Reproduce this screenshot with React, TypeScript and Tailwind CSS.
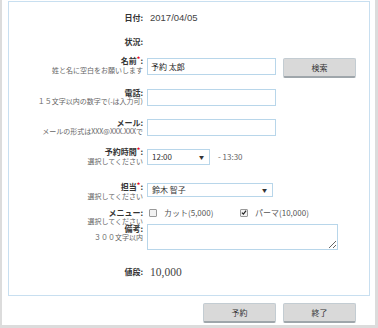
import type { ReactNode } from "react";

const jp = "font-['Noto_Sans_CJK_JP','Noto_Sans',sans-serif]";

type LabelProps = {
  title: string;
  req?: boolean;
  sub?: string;
};

function Label(props: LabelProps) {
  return (
    <div className="w-[134px] shrink-0 text-right">
      <div className="text-[8px] font-bold leading-[9px] text-[#333]">
        {props.title}
        {props.req && <span className="relative -top-[2px] text-[7px] text-[#e60012]">*</span>}:
      </div>
      {props.sub && <div className="text-[7px] leading-[8px] text-[#666]">{props.sub}</div>}
    </div>
  );
}

function Row({ h, children }: { h: string; children: ReactNode }) {
  return <div className={`flex items-start gap-[4px] ${h}`}>{children}</div>;
}

function Field({ value, className }: { value?: string; className: string }) {
  return (
    <div
      className={`flex items-center border border-[#b8d6ea] bg-white pl-[3px] text-[8px] text-[#222] ${className}`}
    >
      {value}
    </div>
  );
}

function Select({ value, className }: { value: string; className: string }) {
  return (
    <div
      className={`flex items-center justify-between border border-[#b8d6ea] bg-white pl-[4px] pr-[5px] text-[8px] text-[#333] ${className}`}
    >
      <span>{value}</span>
      <span className="text-[5px] text-[#333]">▼</span>
    </div>
  );
}

function Button({ children, className }: { children: ReactNode; className?: string }) {
  return (
    <div
      className={`flex h-[20px] w-[73px] items-center justify-center rounded-[2px] border border-[#c3ccd2] border-b-2 border-b-[#9fa6ab] bg-[#d9d9d9] text-[8px] text-[#333] ${className ?? ""}`}
    >
      {children}
    </div>
  );
}

function Check({ checked }: { checked?: boolean }) {
  return (
    <span className="flex h-[8px] w-[8px] items-center justify-center rounded-[1px] border border-[#999] bg-[#f2f2f2]">
      {checked && (
        <svg width="7" height="7" viewBox="0 0 8 8">
          <path d="M1.2 4.2 L3.2 6.2 L6.8 1.6" fill="none" stroke="#222" strokeWidth="1.6" />
        </svg>
      )}
    </span>
  );
}

export default function App() {
  return (
    <div className={`h-[328px] w-[378px] bg-[#dcdcdc] pb-[3px] pl-[2px] pr-[3px] ${jp}`}>
      <div className="flex h-full flex-col bg-white pl-[6px] pr-[5px] pt-[1px]">
        <div className="h-[295px] border border-[#c8dff0] pt-[8px]">
          <Row h="h-[24px]">
            <div className="w-[134px] text-right text-[8px] font-bold leading-[16px] text-[#333]">日付:</div>
            <div className="pl-[3px] font-['Liberation_Sans',sans-serif] text-[9.5px] leading-[16px] text-[#444]">
              2017/04/05
            </div>
          </Row>
          <Row h="h-[22px]">
            <div className="w-[134px] text-right text-[8px] font-bold leading-[16px] text-[#333]">状況:</div>
          </Row>
          <Row h="h-[32px]">
            <Label title="名前" req sub="姓と名に空白をお願いします" />
            <Field value="予約 太郎" className="mt-[2px] h-[17px] w-[129px]" />
            <Button className="ml-[3px] mt-[2px]">検索</Button>
          </Row>
          <Row h="h-[30px]">
            <Label title="電話" sub="１５文字以内の数字で(-は入力可)" />
            <Field className="mt-[1px] h-[17px] w-[129px]" />
          </Row>
          <Row h="h-[29px]">
            <Label title="メール" sub="メールの形式はXXX@XXX.XXXで" />
            <Field className="mt-[1px] h-[17px] w-[129px]" />
          </Row>
          <Row h="h-[35px]">
            <Label title="予約時間" req sub="選択してください" />
            <Select value="12:00" className="mt-[2px] h-[16px] w-[63px]" />
            <span className="ml-[4px] mt-[2px] text-[8px] leading-[16px] text-[#666]">- 13:30</span>
          </Row>
          <Row h="h-[26px]">
            <Label title="担当" req sub="選択してください" />
            <Select value="鈴木 智子" className="mt-[1px] h-[14px] w-[126px]" />
          </Row>
          <Row h="h-[16px]">
            <Label title="メニュー" sub="選択してください" />
            <div className="flex h-[9px] items-center pl-[2px] text-[8px] text-[#555]">
              <Check />
              <span className="ml-[7px] w-[76px]">カット(5,000)</span>
              <Check checked />
              <span className="ml-[7px]">パーマ(10,000)</span>
            </div>
          </Row>
          <Row h="h-[40px]">
            <Label title="備考" sub="３００文字以内" />
            <textarea
              readOnly
              className="h-[26px] w-[191px] resize-y border border-[#b8d6ea] bg-white text-[8px] outline-none"
            />
          </Row>
          <Row h="h-[16px]">
            <div className="w-[134px] text-right text-[8px] font-bold leading-[16px] text-[#333]">値段:</div>
            <div className="pl-[3px] font-['Liberation_Serif',serif] text-[11.5px] leading-[16px] text-[#444]">
              10,000
            </div>
          </Row>
        </div>
        <div className="flex justify-end gap-[7px] pr-[14px] pt-[7px]">
          <Button>予約</Button>
          <Button>終了</Button>
        </div>
      </div>
    </div>
  );
}
